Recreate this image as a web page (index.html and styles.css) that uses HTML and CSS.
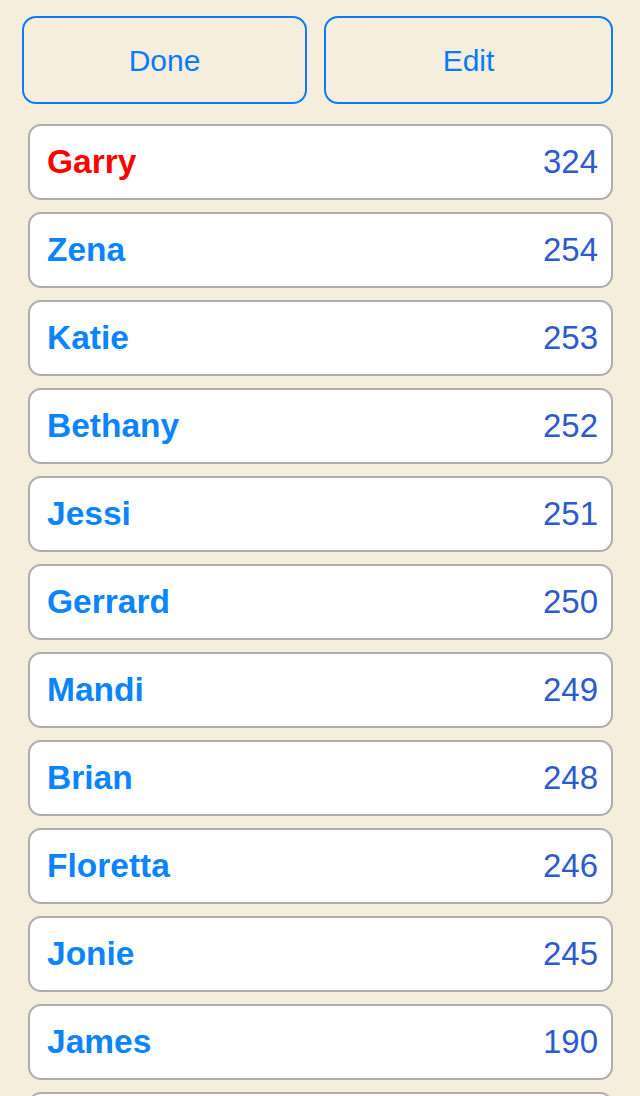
FILE: index.html
```html
<!DOCTYPE html>
<html>
<head>
<meta charset="utf-8">
<link rel="stylesheet" href="styles.css">
</head>
<body>
<div class="page">
  <div class="actions">
    <button class="btn btn-done">Done</button>
    <button class="btn btn-edit">Edit</button>
  </div>
  <ul class="list">
    <li class="row"><span class="name name-top">Garry</span><span class="score">324</span></li>
    <li class="row"><span class="name">Zena</span><span class="score">254</span></li>
    <li class="row"><span class="name">Katie</span><span class="score">253</span></li>
    <li class="row"><span class="name">Bethany</span><span class="score">252</span></li>
    <li class="row"><span class="name">Jessi</span><span class="score">251</span></li>
    <li class="row"><span class="name">Gerrard</span><span class="score">250</span></li>
    <li class="row"><span class="name">Mandi</span><span class="score">249</span></li>
    <li class="row"><span class="name">Brian</span><span class="score">248</span></li>
    <li class="row"><span class="name">Floretta</span><span class="score">246</span></li>
    <li class="row"><span class="name">Jonie</span><span class="score">245</span></li>
    <li class="row"><span class="name">James</span><span class="score">190</span></li>
    <li class="row row-partial"></li>
  </ul>
</div>
</body>
</html>
```
FILE: styles.css
```css
html, body {
  margin: 0;
  padding: 0;
  background: #f5eedc;
  height: 1096px;
  overflow: hidden;
}
.page {
  font-family: "Liberation Sans", Arial, sans-serif;
  padding: 16px 27px 0 22px;
}
.actions {
  display: grid;
  grid-template-columns: 285px 289px;
  column-gap: 17px;
}
.btn {
  height: 88px;
  border: 2px solid #0a7aff;
  border-radius: 14px;
  background: transparent;
  color: #0a7aff;
  font-family: "Liberation Sans", Arial, sans-serif;
  font-size: 30px;
  padding: 2px 0 0;
}
.list {
  list-style: none;
  margin: 20px 0 0 6px;
  padding: 0;
  display: flex;
  flex-direction: column;
  gap: 12px;
}
.row {
  box-sizing: border-box;
  height: 76px;
  background: #fff;
  border: 2px solid #adadad;
  border-radius: 13px;
  display: flex;
  align-items: center;
  justify-content: space-between;
  padding: 0 13px 0 17px;
  flex-shrink: 0;
}
.name {
  font-weight: bold;
  font-size: 33.5px;
  color: #0a84ff;
}
.name-top {
  color: #ff0000;
}
.score {
  font-size: 33px;
  color: #2d5bcf;
}
```
